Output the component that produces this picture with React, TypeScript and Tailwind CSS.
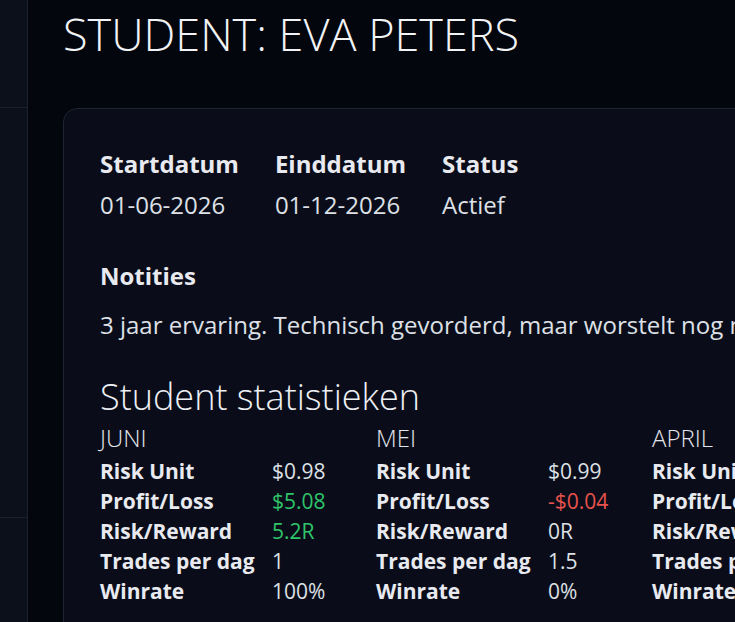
import React from "react";

type Stat = { label: string; value: string; tone?: "green" | "red" };
type Month = { name: string; stats: Stat[] };

const months: Month[] = [
  {
    name: "JUNI",
    stats: [
      { label: "Risk Unit", value: "$0.98" },
      { label: "Profit/Loss", value: "$5.08", tone: "green" },
      { label: "Risk/Reward", value: "5.2R", tone: "green" },
      { label: "Trades per dag", value: "1" },
      { label: "Winrate", value: "100%" },
    ],
  },
  {
    name: "MEI",
    stats: [
      { label: "Risk Unit", value: "$0.99" },
      { label: "Profit/Loss", value: "-$0.04", tone: "red" },
      { label: "Risk/Reward", value: "0R" },
      { label: "Trades per dag", value: "1.5" },
      { label: "Winrate", value: "0%" },
    ],
  },
  {
    name: "APRIL",
    stats: [
      { label: "Risk Unit", value: "$1.00" },
      { label: "Profit/Loss", value: "$0.00" },
      { label: "Risk/Reward", value: "0R" },
      { label: "Trades per dag", value: "1" },
      { label: "Winrate", value: "0%" },
    ],
  },
];

export default function App() {
  return (
    <div
      className="flex h-[622px] w-[735px] overflow-hidden bg-[#04060d] text-[#e6e8ee]"
      style={{ fontFamily: '"Open Sans", "Noto Sans", sans-serif' }}
    >
      <aside className="flex w-[28px] shrink-0 flex-col border-r border-[#1a202d] bg-[#0b101b]">
        <div className="h-[108px] border-b border-[#1a202d]" />
        <div className="h-[410px] border-b border-[#1a202d]" />
        <div className="flex-1" />
      </aside>
      <main className="min-w-0 flex-1 overflow-hidden pl-[35px] pt-[5px]">
        <h1 className="whitespace-nowrap text-[45px] font-light leading-[58px] text-[#f1f3f6]">
          STUDENT: EVA PETERS
        </h1>
        <section className="mt-[45px] w-[820px] rounded-[14px] border border-[#1d2331] bg-[#0a0d19] pl-[36px] pt-[34px] pb-10">
          <div className="flex gap-[36px] text-[24px] leading-[41px]">
            <div>
              <div className="font-bold text-[#e8eaf0]">Startdatum</div>
              <div className="text-[#dde0e6]">01-06-2026</div>
            </div>
            <div>
              <div className="font-bold text-[#e8eaf0]">Einddatum</div>
              <div className="text-[#dde0e6]">01-12-2026</div>
            </div>
            <div>
              <div className="font-bold text-[#e8eaf0]">Status</div>
              <div className="text-[#dde0e6]">Actief</div>
            </div>
          </div>
          <div className="mt-[30px] text-[24px] leading-[41px]">
            <div className="font-bold text-[#e8eaf0]">Notities</div>
            <p className="mt-[8px] whitespace-nowrap text-[#dde0e6]">
              3 jaar ervaring. Technisch gevorderd, maar worstelt nog met discipline en geduld.
            </p>
          </div>
          <h2 className="mt-[32px] text-[36px] font-light leading-[40px] text-[#eef0f4]">
            Student statistieken
          </h2>
          <div className="mt-[6px] flex">
            {months.map((m) => (
              <div key={m.name} className="w-[276px] shrink-0">
                <div className="text-[24px] font-light leading-[30px] text-[#e4e6ec]">{m.name}</div>
                <div className="mt-[3px] grid grid-cols-[172px_1fr] text-[21px] leading-[30px]">
                  {m.stats.map((s) => (
                    <React.Fragment key={s.label}>
                      <div className="whitespace-nowrap font-bold text-[#e8eaf0]">{s.label}</div>
                      <div
                        className={
                          s.tone === "green"
                            ? "text-[#2fc46a]"
                            : s.tone === "red"
                            ? "text-[#e8534d]"
                            : "text-[#dde0e6]"
                        }
                      >
                        {s.value}
                      </div>
                    </React.Fragment>
                  ))}
                </div>
              </div>
            ))}
          </div>
        </section>
      </main>
    </div>
  );
}
